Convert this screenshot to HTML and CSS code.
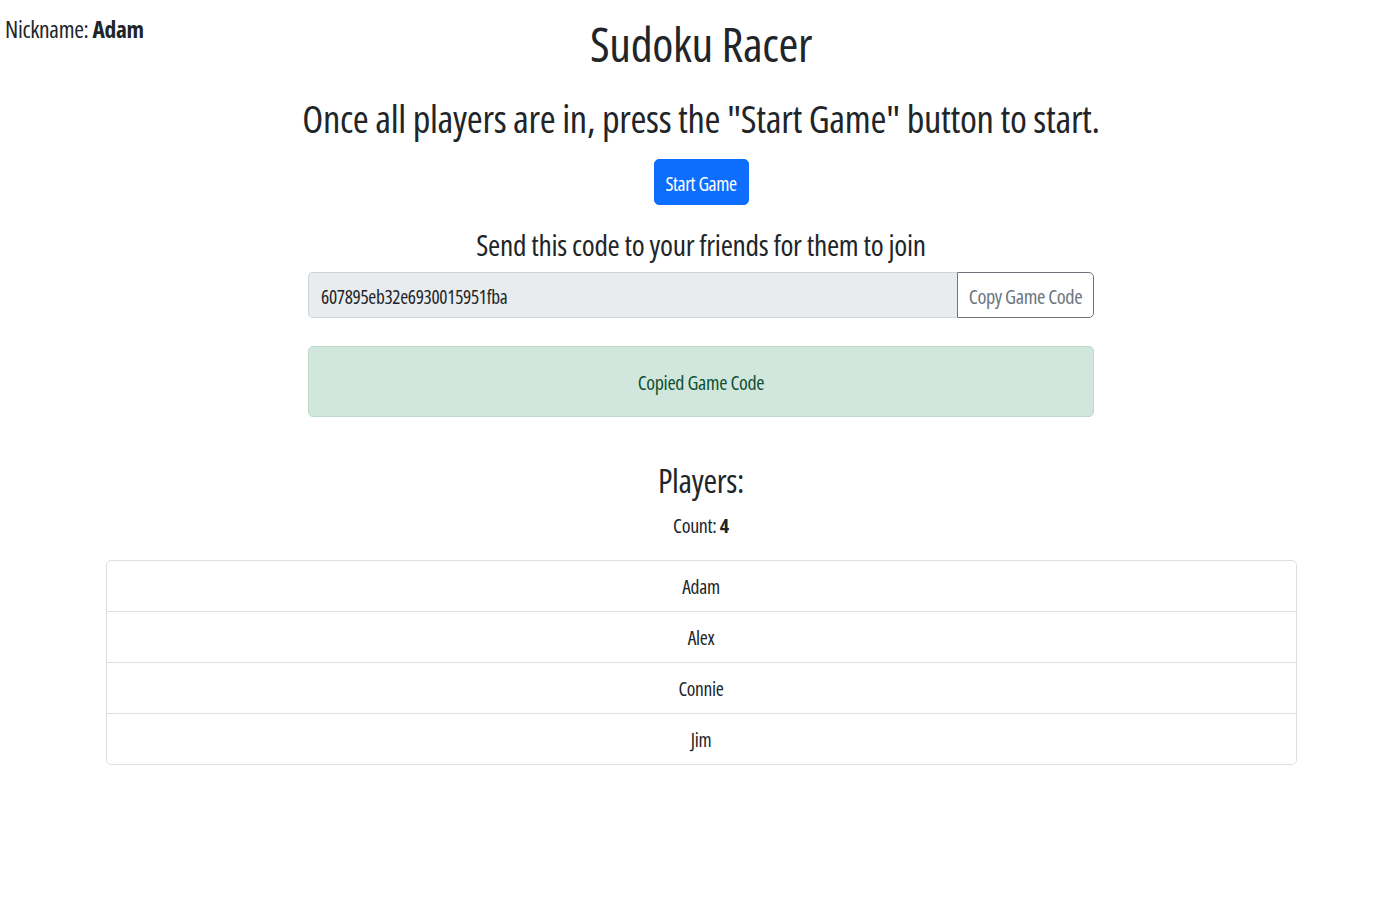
FILE: index.html
```html
<!DOCTYPE html>
<html lang="en">
<head>
<meta charset="utf-8">
<title>Sudoku Racer</title>
<link rel="stylesheet" href="styles.css">
</head>
<body>
<header class="top">
  <div class="nick">Nickname: <b>Adam</b></div>
  <h1 class="title">Sudoku Racer</h1>
  <div></div>
</header>
<main class="lobby">
  <section class="narrow">
    <h2 class="subtitle">Once all players are in, press the "Start Game" button to start.</h2>
    <button class="btn-start" type="button">Start Game</button>
    <h3 class="send">Send this code to your friends for them to join</h3>
    <div class="input-group">
      <div class="code-input">607895eb32e6930015951fba</div>
      <button class="btn-copy" type="button">Copy Game Code</button>
    </div>
    <div class="alert">Copied Game Code</div>
    <h2 class="players">Players:</h2>
    <div class="count">Count: <b>4</b></div>
  </section>
  <ul class="list">
    <li>Adam</li>
    <li>Alex</li>
    <li>Connie</li>
    <li>Jim</li>
  </ul>
</main>
</body>
</html>
```
FILE: styles.css
```css
* { box-sizing: border-box; }
body {
  margin: 0;
  padding-left: 2px;
  background: #fff;
  color: #212529;
  font-family: "Open Sans", "Noto Sans", sans-serif;
  font-stretch: 75%;
  letter-spacing: -0.02em;
}
h1, h2, h3 { margin: 0; font-weight: 400; }

.top {
  display: grid;
  grid-template-columns: 1fr auto 1fr;
  align-items: start;
}
.nick {
  font-size: 23.5px;
  line-height: 58px;
  padding-left: 3px;
}
.nick b { font-weight: 700; }
.title {
  font-size: 48px;
  line-height: 60px;
  margin-top: 14px;
  text-align: center;
}

.lobby {
  display: flex;
  flex-direction: column;
  align-items: center;
}
.narrow {
  width: 786px;
  display: flex;
  flex-direction: column;
  align-items: center;
  text-align: center;
}
.subtitle {
  font-size: 38.5px;
  line-height: 50px;
  margin-top: 19px;
  white-space: nowrap;
}
.btn-start {
  margin-top: 16px;
  height: 46px;
  width: 95px;
  padding: 2px 0 0;
  background: #0d6efd;
  border: 1px solid #0d6efd;
  border-radius: 5px;
  color: #fff;
  font-family: inherit;
  font-stretch: 75%;
  letter-spacing: -0.02em;
  font-size: 19.5px;
}
.send {
  font-size: 29.5px;
  line-height: 40px;
  margin-top: 20px;
}
.input-group {
  margin-top: 7px;
  width: 100%;
  height: 46px;
  display: flex;
}
.code-input {
  flex: 1;
  display: flex;
  align-items: center;
  padding: 2px 12px 0;
  background: #e9ecef;
  border: 1px solid #ced4da;
  border-right: none;
  border-radius: 5px 0 0 5px;
  font-size: 19.3px;
  text-align: left;
}
.btn-copy {
  width: 137px;
  background: #fff;
  border: 1px solid #6c757d;
  border-radius: 0 5px 5px 0;
  color: #6c757d;
  font-family: inherit;
  font-stretch: 75%;
  letter-spacing: -0.02em;
  font-size: 20.3px;
  padding: 2px 0 0;
}
.alert {
  margin-top: 28px;
  width: 100%;
  height: 71px;
  display: flex;
  align-items: center;
  justify-content: center;
  padding-top: 2px;
  background: #d1e7dd;
  border: 1px solid #badbcc;
  border-radius: 5px;
  color: #0f5132;
  font-size: 20px;
}
.players {
  font-size: 33px;
  line-height: 50px;
  margin-top: 39px;
}
.count {
  font-size: 20px;
  line-height: 30px;
  margin-top: 5px;
}
.count b { font-weight: 700; }

.list {
  list-style: none;
  margin: 19px 0 0;
  padding: 0;
  width: 1191px;
  border: 1px solid #dfdfdf;
  border-radius: 5px;
}
.list li {
  height: 50px;
  display: flex;
  align-items: center;
  justify-content: center;
  font-size: 19.5px;
}
.list li + li {
  height: 51px;
  border-top: 1px solid #dfdfdf;
}
```
